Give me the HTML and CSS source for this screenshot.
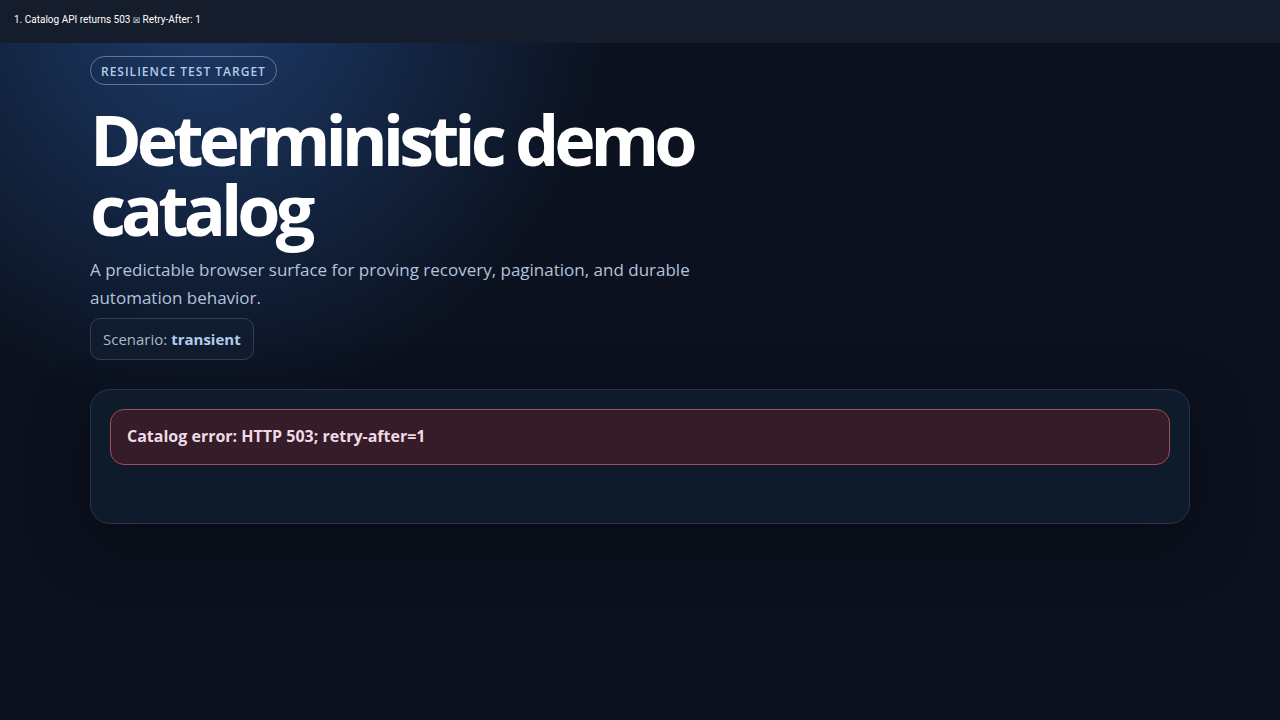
FILE: index.html
```html
<!DOCTYPE html>
<html lang="en">
<head>
    <meta charset="UTF-8">
    <meta name="viewport" content="width=device-width, initial-scale=1.0">
    <title>Deterministic demo catalog</title>
    <link rel="stylesheet" href="styles.css">
</head>
<body>
    <div class="caption">1. Catalog API returns 503 <span class="glyph">☒</span> Retry-After: 1</div>

    <main class="page">
        <header class="hero">
            <div class="eyebrow">Resilience test target</div>
            <h1>Deterministic demo catalog</h1>
            <p class="lede">A predictable browser surface for proving recovery, pagination, and durable automation behavior.</p>
            <div class="scenario">Scenario: <strong>transient</strong></div>
        </header>

        <section class="catalog" aria-label="Catalog">
            <div class="error" role="alert">Catalog error: HTTP 503; retry-after=1</div>
        </section>
    </main>
</body>
</html>
```

FILE: styles.css
```css
* {
    box-sizing: border-box;
}
body {
    margin: 0;
    min-height: 100vh;
    font-family: "Open Sans", "Noto Sans", sans-serif;
    font-size: 15px;
    color: #e6edf8;
    background: radial-gradient(circle at 16% 0, #1d3b6a 0, #0b111e 410px) no-repeat #0b111e;
}
.caption {
    height: 43px;
    padding: 12px 14px;
    font-family: Roboto, Arial, sans-serif;
    font-size: 10px;
    line-height: 16px;
    color: #fff;
    background: #151c2b;
}
.glyph {
    font-family: "DejaVu Sans", sans-serif;
    font-size: 8px;
}
.page {
    max-width: 1100px;
    margin: 0 auto;
    padding: 13px 0 48px;
}
.hero {
    display: flex;
    flex-direction: column;
    align-items: flex-start;
    max-width: 620px;
    margin-bottom: 29px;
}
.eyebrow {
    padding: 6px 10px 4px;
    border: 1px solid #66778f;
    border-radius: 999px;
    font-size: 12px;
    font-weight: 600;
    line-height: 17px;
    letter-spacing: 1px;
    text-transform: uppercase;
    color: #b5cbe8;
}
h1 {
    margin: 19px 0 12px;
    font-size: 70px;
    font-weight: 700;
    line-height: 70px;
    letter-spacing: -5px;
    color: #fff;
}
.lede {
    margin: 0 0 6px;
    font-size: 17px;
    line-height: 28px;
    color: #b3c3dc;
}
.scenario {
    padding: 9px 12px;
    border: 1px solid #2a3f5c;
    border-radius: 10px;
    line-height: 22px;
    color: #a9b8cf;
    background: #101c2d;
}
.scenario strong {
    color: #b0cdf0;
}
.catalog {
    min-height: 135px;
    padding: 19px;
    border: 1px solid #24364f;
    border-radius: 20px;
    background: #0f1a2b;
    box-shadow: 0 20px 60px rgba(0, 0, 0, 0.35);
}
.error {
    padding: 15px 16px 17px;
    border: 1px solid #98505f;
    border-radius: 14px;
    font-size: 16px;
    font-weight: 700;
    line-height: 22px;
    color: #ecdbe4;
    background: #361b28;
}
```
